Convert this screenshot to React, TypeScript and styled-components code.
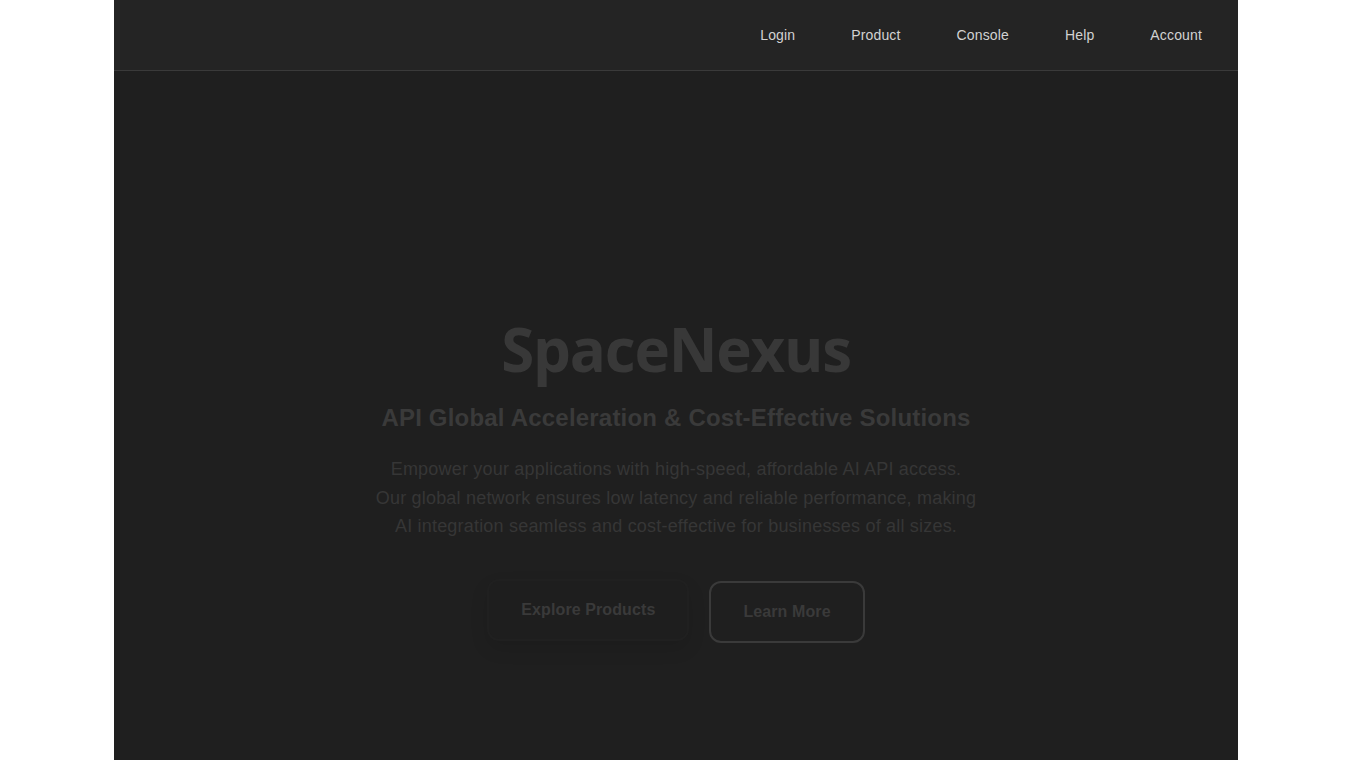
import React from 'react';
import styled, { createGlobalStyle } from 'styled-components';

const GlobalStyle = createGlobalStyle`
  html, body {
    margin: 0;
    padding: 0;
    background: #ffffff;
  }
  body {
    font-family: 'Liberation Sans', Arial, sans-serif;
  }
`;

const navItems = ['Login', 'Product', 'Console', 'Help', 'Account'];

const App: React.FC = () => {
  return (
    <>
      <GlobalStyle />
      <Page>
        <Header>
          <Nav>
            {navItems.map((item) => (
              <NavLink key={item}>{item}</NavLink>
            ))}
          </Nav>
        </Header>
        <Hero>
          <Title>SpaceNexus</Title>
          <Subtitle>API Global Acceleration &amp; Cost-Effective Solutions</Subtitle>
          <Description>
            Empower your applications with high-speed, affordable AI API access. Our global network
            ensures low latency and reliable performance, making AI integration seamless and
            cost-effective for businesses of all sizes.
          </Description>
          <Actions>
            <PrimaryButton>Explore Products</PrimaryButton>
            <OutlineButton>Learn More</OutlineButton>
          </Actions>
        </Hero>
      </Page>
    </>
  );
};

const Page = styled.div`
  width: 1124px;
  height: 760px;
  margin: 0 auto;
  background: #1f1f1f;
  display: flex;
  flex-direction: column;
  overflow: hidden;
`;

const Header = styled.header`
  height: 71px;
  flex-shrink: 0;
  background: #242424;
  border-bottom: 1px solid #3a3a3a;
  box-sizing: border-box;
  display: flex;
  align-items: center;
  justify-content: flex-end;
  padding-right: 36px;
`;

const Nav = styled.nav`
  display: flex;
  align-items: center;
  gap: 56px;
`;

const NavLink = styled.a`
  font-size: 14px;
  letter-spacing: 0.15px;
  color: #d2d2d2;
  cursor: pointer;
  text-decoration: none;
`;

const Hero = styled.section`
  flex: 1;
  display: flex;
  flex-direction: column;
  align-items: center;
  padding-top: 242px;
  text-align: center;
`;

const Title = styled.h1`
  margin: 0;
  font-family: 'Open Sans', 'Liberation Sans', sans-serif;
  font-weight: 700;
  font-size: 60px;
  line-height: 72px;
  color: #383838;
  letter-spacing: -1.2px;
`;

const Subtitle = styled.h2`
  margin: 18px 0 0;
  font-size: 24px;
  font-weight: 700;
  line-height: 30px;
  letter-spacing: 0.2px;
  color: #3a3a3a;
`;

const Description = styled.p`
  margin: 22px 0 0;
  max-width: 602px;
  font-size: 18px;
  line-height: 28.5px;
  letter-spacing: 0.2px;
  color: #363636;
`;

const Actions = styled.div`
  display: flex;
  align-items: center;
  gap: 20px;
  margin-top: 40px;
`;

const PrimaryButton = styled.button`
  font-family: 'Liberation Sans', Arial, sans-serif;
  font-size: 16px;
  font-weight: 700;
  letter-spacing: 0.1px;
  color: #3a3a3a;
  background: #1e1e1e;
  border: 2px solid #202020;
  border-radius: 12px;
  padding: 20px 32px;
  transform: translateY(-2px);
  box-shadow: 0 8px 18px rgba(0, 0, 0, 0.1);
  cursor: pointer;
`;

const OutlineButton = styled.button`
  font-family: 'Liberation Sans', Arial, sans-serif;
  font-size: 16px;
  font-weight: 700;
  letter-spacing: 0.1px;
  color: #3a3a3a;
  background: transparent;
  border: 2px solid #3a3a3a;
  border-radius: 12px;
  padding: 20px 32px;
  cursor: pointer;
`;

export default App;
